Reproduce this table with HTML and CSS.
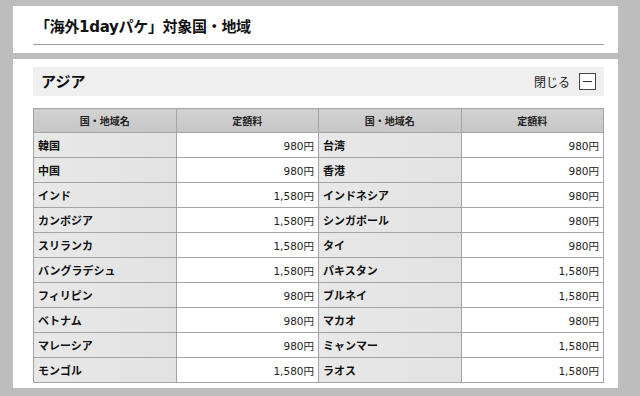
FILE: index.html
```html
<!DOCTYPE html>
<html lang="ja">
<head>
<meta charset="utf-8">
<link rel="stylesheet" href="styles.css">
</head>
<body>
<div class="page">
  <section class="card title-card">
    <h1 class="title">「海外1dayパケ」対象国・地域</h1>
  </section>
  <section class="card region-card">
    <div class="region-head">
      <h2 class="region-name">アジア</h2>
      <div class="toggle">閉じる<span class="toggle-box"><span class="toggle-bar"></span></span></div>
    </div>
    <table class="rates">
      <thead>
        <tr><th>国・地域名</th><th>定額料</th><th>国・地域名</th><th>定額料</th></tr>
      </thead>
      <tbody>
        <tr><td class="name">韓国</td><td class="price">980円</td><td class="name">台湾</td><td class="price">980円</td></tr>
        <tr><td class="name">中国</td><td class="price">980円</td><td class="name">香港</td><td class="price">980円</td></tr>
        <tr><td class="name">インド</td><td class="price">1,580円</td><td class="name">インドネシア</td><td class="price">980円</td></tr>
        <tr><td class="name">カンボジア</td><td class="price">1,580円</td><td class="name">シンガポール</td><td class="price">980円</td></tr>
        <tr><td class="name">スリランカ</td><td class="price">1,580円</td><td class="name">タイ</td><td class="price">980円</td></tr>
        <tr><td class="name">バングラデシュ</td><td class="price">1,580円</td><td class="name">パキスタン</td><td class="price">1,580円</td></tr>
        <tr><td class="name">フィリピン</td><td class="price">980円</td><td class="name">ブルネイ</td><td class="price">1,580円</td></tr>
        <tr><td class="name">ベトナム</td><td class="price">980円</td><td class="name">マカオ</td><td class="price">980円</td></tr>
        <tr><td class="name">マレーシア</td><td class="price">980円</td><td class="name">ミャンマー</td><td class="price">1,580円</td></tr>
        <tr><td class="name">モンゴル</td><td class="price">1,580円</td><td class="name">ラオス</td><td class="price">1,580円</td></tr>
      </tbody>
    </table>
  </section>
</div>
</body>
</html>
```

FILE: styles.css
```css
html, body {
  margin: 0;
  padding: 0;
  background: #bdbdbd;
  font-family: "DejaVu Sans", "Noto Sans CJK JP", sans-serif;
  color: #111;
}
.page {
  width: 605px;
  padding: 6px 0 0 13px;
  display: flex;
  flex-direction: column;
  gap: 6px;
}
.card {
  background: #fff;
}
.title-card {
  height: 47px;
  padding: 0 14px 0 20px;
  box-sizing: border-box;
}
.title {
  margin: 0;
  height: 39px;
  box-sizing: border-box;
  padding: 12px 0 0 2px;
  font-size: 15px;
  line-height: 18px;
  font-weight: bold;
  border-bottom: 1px solid #9c9c9c;
  letter-spacing: -0.3px;
}
.region-card {
  padding: 8px 14px 6px 20px;
  height: 329px;
  box-sizing: border-box;
}
.region-head {
  height: 29px;
  background: #efefef;
  display: flex;
  align-items: center;
  justify-content: space-between;
  padding: 0 8px;
}
.region-name {
  margin: 0;
  font-size: 15px;
  font-weight: bold;
  line-height: 18px;
}
.toggle {
  display: flex;
  align-items: center;
  gap: 9px;
  font-size: 12px;
  color: #222;
}
.toggle-box {
  width: 15px;
  height: 15px;
  border: 1px solid #444;
  background: #fff;
  display: flex;
  align-items: center;
  justify-content: center;
}
.toggle-bar {
  width: 9px;
  height: 1px;
  background: #333;
}
.rates {
  margin-top: 12px;
  width: 100%;
  border-collapse: collapse;
  table-layout: fixed;
  border: 1px solid #a4a4a4;
}
.rates th, .rates td {
  border: 1px solid #a4a4a4;
  height: 25px;
  padding: 0 4px;
  box-sizing: border-box;
}
.rates th {
  height: 24px;
  background: linear-gradient(#d2d2d2, #c6c6c6);
  font-size: 10px;
  font-weight: bold;
  text-align: center;
  color: #222;
}
.rates td.name {
  background: linear-gradient(90deg, #e8e8e8, #e2e2e2);
  font-size: 11px;
  font-weight: bold;
  text-align: left;
}
.rates td.price {
  background: #fff;
  font-size: 10.5px;
  text-align: right;
  color: #222;
}
```
